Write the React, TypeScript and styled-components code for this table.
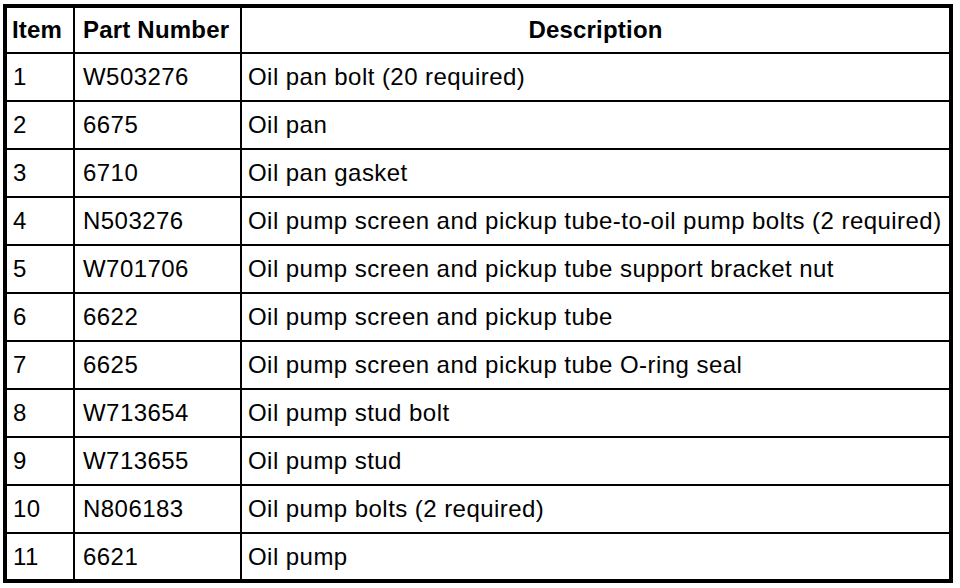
import React from "react";
import styled, { createGlobalStyle } from "styled-components";

const GlobalStyle = createGlobalStyle`
  html, body {
    margin: 0;
    padding: 0;
    background: #ffffff;
  }
  body {
    font-family: "Liberation Sans", Arial, sans-serif;
    color: #000000;
  }
`;

const Page = styled.div`
  width: 960px;
  height: 588px;
  padding: 4px 0 0 3px;
  box-sizing: border-box;
`;

const Table = styled.table`
  width: 950px;
  border: 4px solid #000;
  border-collapse: separate;
  border-spacing: 0;
  table-layout: fixed;
`;

interface CellProps {
  width?: string;
  align?: string;
  pl?: string;
  last?: boolean;
}

const HeadCell = styled.th<CellProps>`
  width: ${(props) => (props.width ? props.width : "auto")};
  height: 46px;
  padding: 0 0 1px ${(props) => (props.pl ? props.pl : "0")};
  box-sizing: border-box;
  font-family: "Liberation Sans", Arial, sans-serif;
  font-size: 24px;
  letter-spacing: 0.2px;
  text-align: ${(props) => (props.align ? props.align : "left")};
  font-weight: 700;
  border-bottom: 2px solid #000;
  border-right: ${(props) => (props.last ? "none" : "2px solid #000")};
  white-space: nowrap;
`;

const Cell = styled.td<CellProps & { bottom?: boolean }>`
  height: ${(props) => (props.bottom ? "45px" : "48px")};
  padding: 0 0 0 ${(props) => (props.pl ? props.pl : "0")};
  box-sizing: border-box;
  font-family: "Liberation Sans", Arial, sans-serif;
  font-size: 24px;
  letter-spacing: 0.45px;
  border-bottom: ${(props) => (props.bottom ? "none" : "2px solid #000")};
  border-right: ${(props) => (props.last ? "none" : "2px solid #000")};
  white-space: nowrap;
  vertical-align: middle;
`;

const parts = [
  ["1", "W503276", "Oil pan bolt (20 required)"],
  ["2", "6675", "Oil pan"],
  ["3", "6710", "Oil pan gasket"],
  ["4", "N503276", "Oil pump screen and pickup tube-to-oil pump bolts (2 required)"],
  ["5", "W701706", "Oil pump screen and pickup tube support bracket nut"],
  ["6", "6622", "Oil pump screen and pickup tube"],
  ["7", "6625", "Oil pump screen and pickup tube O-ring seal"],
  ["8", "W713654", "Oil pump stud bolt"],
  ["9", "W713655", "Oil pump stud"],
  ["10", "N806183", "Oil pump bolts (2 required)"],
  ["11", "6621", "Oil pump"],
];

export default function App() {
  return (
    <>
      <GlobalStyle />
      <Page>
        <Table>
          <thead>
            <tr>
              <HeadCell width="68px" pl="5px">
                Item
              </HeadCell>
              <HeadCell width="167px" pl="8px">
                Part Number
              </HeadCell>
              <HeadCell align="center" last>
                Description
              </HeadCell>
            </tr>
          </thead>
          <tbody>
            {parts.map((row, i) => (
              <tr key={row[0]}>
                <Cell pl="6px" bottom={i === parts.length - 1}>
                  {row[0]}
                </Cell>
                <Cell pl="8px" bottom={i === parts.length - 1}>
                  {row[1]}
                </Cell>
                <Cell pl="6px" last bottom={i === parts.length - 1}>
                  {row[2]}
                </Cell>
              </tr>
            ))}
          </tbody>
        </Table>
      </Page>
    </>
  );
}
